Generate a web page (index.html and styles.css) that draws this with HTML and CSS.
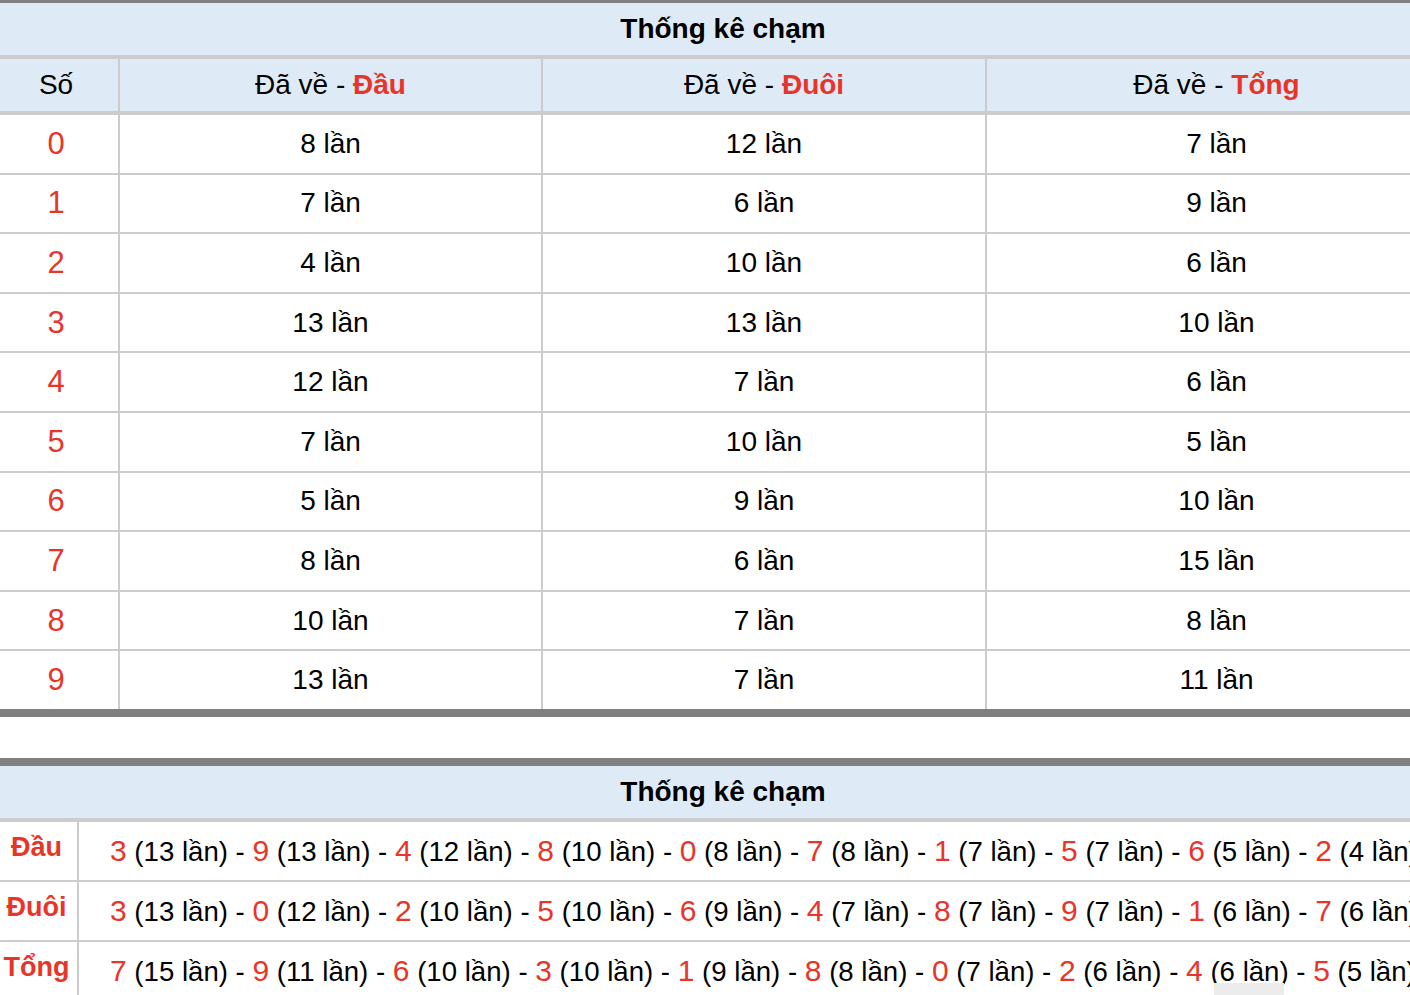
FILE: index.html
```html
<!DOCTYPE html>
<html lang="vi">
<head>
<meta charset="utf-8">
<title>Thống kê chạm</title>
<link rel="stylesheet" href="styles.css">
</head>
<body>
<div class="page">
  <table class="stat stat-cham">
    <colgroup>
      <col class="c-so">
      <col class="c-dau">
      <col class="c-duoi">
      <col class="c-tong">
    </colgroup>
    <thead>
      <tr><th class="title" colspan="4">Thống kê chạm</th></tr>
      <tr class="head">
        <th class="first">Số</th>
        <th>Đã về - <b class="red">Đầu</b></th>
        <th>Đã về - <b class="red">Đuôi</b></th>
        <th>Đã về - <b class="red">Tổng</b></th>
      </tr>
    </thead>
    <tbody>
      <tr><td class="num">0</td><td>8 lần</td><td>12 lần</td><td>7 lần</td></tr>
      <tr><td class="num">1</td><td>7 lần</td><td>6 lần</td><td>9 lần</td></tr>
      <tr><td class="num">2</td><td>4 lần</td><td>10 lần</td><td>6 lần</td></tr>
      <tr><td class="num">3</td><td>13 lần</td><td>13 lần</td><td>10 lần</td></tr>
      <tr><td class="num">4</td><td>12 lần</td><td>7 lần</td><td>6 lần</td></tr>
      <tr><td class="num">5</td><td>7 lần</td><td>10 lần</td><td>5 lần</td></tr>
      <tr><td class="num">6</td><td>5 lần</td><td>9 lần</td><td>10 lần</td></tr>
      <tr><td class="num">7</td><td>8 lần</td><td>6 lần</td><td>15 lần</td></tr>
      <tr><td class="num">8</td><td>10 lần</td><td>7 lần</td><td>8 lần</td></tr>
      <tr><td class="num">9</td><td>13 lần</td><td>7 lần</td><td>11 lần</td></tr>
    </tbody>
  </table>

  <table class="stat stat-order">
    <colgroup>
      <col class="c-label">
      <col class="c-seq">
    </colgroup>
    <thead>
      <tr><th class="title" colspan="2">Thống kê chạm</th></tr>
    </thead>
    <tbody>
      <tr>
        <td class="label">Đầu</td>
        <td class="seq"><span class="rn">3</span> (13 lần) - <span class="rn">9</span> (13 lần) - <span class="rn">4</span> (12 lần) - <span class="rn">8</span> (10 lần) - <span class="rn">0</span> (8 lần) - <span class="rn">7</span> (8 lần) - <span class="rn">1</span> (7 lần) - <span class="rn">5</span> (7 lần) - <span class="rn">6</span> (5 lần) - <span class="rn">2</span> (4 lần)</td>
      </tr>
      <tr>
        <td class="label">Đuôi</td>
        <td class="seq"><span class="rn">3</span> (13 lần) - <span class="rn">0</span> (12 lần) - <span class="rn">2</span> (10 lần) - <span class="rn">5</span> (10 lần) - <span class="rn">6</span> (9 lần) - <span class="rn">4</span> (7 lần) - <span class="rn">8</span> (7 lần) - <span class="rn">9</span> (7 lần) - <span class="rn">1</span> (6 lần) - <span class="rn">7</span> (6 lần)</td>
      </tr>
      <tr>
        <td class="label">Tổng</td>
        <td class="seq"><span class="rn">7</span> (15 lần) - <span class="rn">9</span> (11 lần) - <span class="rn">6</span> (10 lần) - <span class="rn">3</span> (10 lần) - <span class="rn">1</span> (9 lần) - <span class="rn">8</span> (8 lần) - <span class="rn">0</span> (7 lần) - <span class="rn">2</span> (6 lần) - <span class="rn">4</span> (6 lần) - <span class="rn">5</span> (5 lần)</td>
      </tr>
    </tbody>
  </table>
</div>
<div class="float-tab"></div>
</body>
</html>
```

FILE: styles.css
```css
html, body {
  margin: 0;
  padding: 0;
  background: #ffffff;
  overflow: hidden;
}

body {
  width: 1410px;
  height: 995px;
  font-family: "Liberation Sans", Arial, Helvetica, sans-serif;
  color: #000000;
}

.page {
  width: 1446px;
  margin-top: -5px;
  display: flex;
  flex-direction: column;
  gap: 41px;
}

.stat {
  width: 1446px;
  border-collapse: separate;
  border-spacing: 0;
  border-top: 8px solid #808080;
  border-bottom: 8px solid #808080;
  table-layout: fixed;
}

.stat th,
.stat td {
  padding: 0;
  text-align: center;
  vertical-align: middle;
  white-space: nowrap;
  box-sizing: border-box;
}

.title {
  height: 56px;
  background: #deebf7;
  font-size: 28px;
  font-weight: bold;
  border-bottom: 4px solid #cccccc;
}

.head th {
  height: 56px;
  background: #deebf7;
  font-size: 28px;
  font-weight: normal;
  border-bottom: 4px solid #cccccc;
}

.head .first,
.stat-cham .num {
  padding-right: 6px;
}

.red {
  color: #e8352a;
  font-weight: bold;
}

.c-so { width: 118px; }
.c-dau { width: 423px; }
.c-duoi { width: 444px; }
.c-tong { width: 461px; }

.c-label { width: 77px; }
.c-seq { width: 1369px; }

.stat-cham .head th + th,
.stat-cham tbody td + td {
  border-left: 2px solid #cccccc;
}

.stat-cham tbody td {
  height: 59.6px;
  font-size: 28px;
  border-bottom: 2px solid #cccccc;
}

.stat-cham tbody tr:last-child td {
  height: 57.6px;
  border-bottom: none;
}

.stat-cham .num {
  color: #e8352a;
  font-size: 31px;
}

.stat-order tbody td {
  height: 60px;
  border-bottom: 2px solid #cccccc;
}

.stat-order .label {
  color: #e8352a;
  font-size: 27px;
  font-weight: bold;
  padding-bottom: 6px;
  padding-right: 4px;
}

.stat-order .seq {
  border-left: 2px solid #cccccc;
  text-align: left;
  padding-left: 31px;
  font-size: 27.6px;
}

.rn {
  color: #e8352a;
  font-size: 30px;
}

.float-tab {
  position: fixed;
  left: 1214px;
  bottom: 0;
  width: 70px;
  height: 12px;
  background: #ececec;
}
```
